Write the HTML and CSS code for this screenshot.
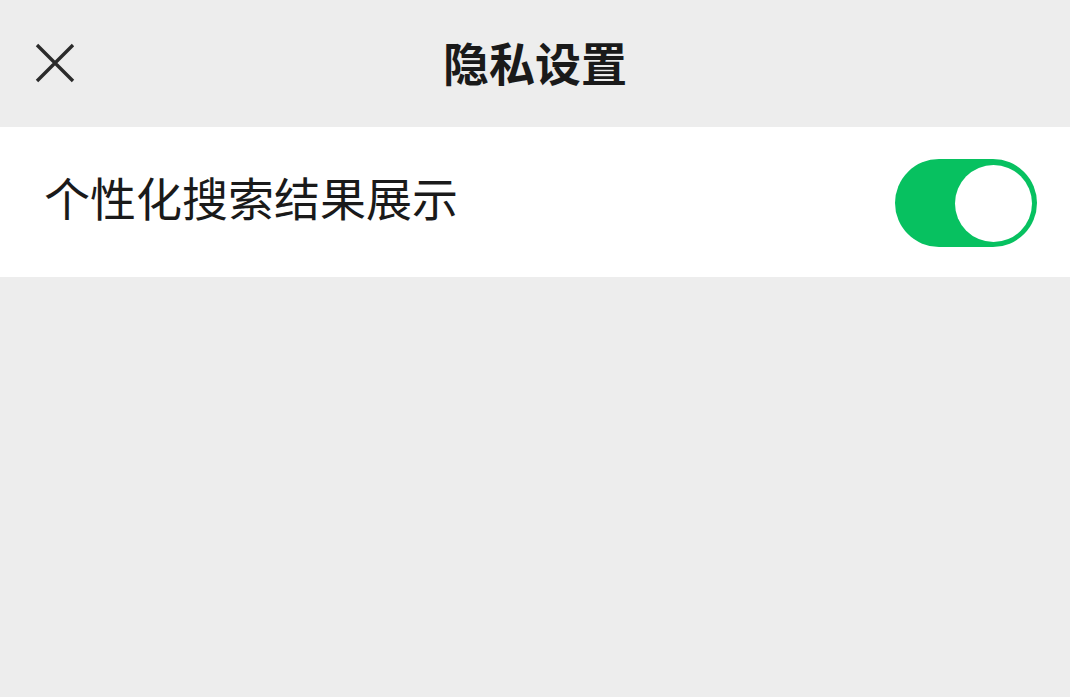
FILE: index.html
```html
<!DOCTYPE html>
<html lang="zh-CN">
<head>
<meta charset="utf-8">
<title>隐私设置</title>
<link rel="stylesheet" href="styles.css">
</head>
<body>
<div class="page">
  <header class="topbar">
    <button class="close" aria-label="关闭">
      <svg width="40" height="40" viewBox="0 0 40 40">
        <path d="M2 2 L38 38 M38 2 L2 38" stroke="#2b2b2b" stroke-width="3.4" stroke-linecap="butt" fill="none"/>
      </svg>
    </button>
    <h1 class="title">隐私设置</h1>
  </header>
  <section class="list">
    <div class="row">
      <span class="label">个性化搜索结果展示</span>
      <span class="switch on"><span class="knob"></span></span>
    </div>
  </section>
</div>
</body>
</html>
```

FILE: styles.css
```css
html, body {
  margin: 0;
  padding: 0;
  background: #ededed;
  font-family: "Noto Sans CJK SC", "Noto Sans", sans-serif;
}
.page {
  width: 1070px;
  height: 697px;
  background: #ededed;
}
.topbar {
  height: 127px;
  display: grid;
  grid-template-columns: 1fr;
  align-items: center;
  position: relative;
}
.close {
  position: absolute;
  left: 35px;
  top: 43px;
  width: 40px;
  height: 40px;
  padding: 0;
  border: 0;
  background: none;
  display: flex;
}
.title {
  margin: 0;
  text-align: center;
  font-size: 46px;
  font-weight: 700;
  color: #1a1a1a;
  line-height: 1;
  padding-bottom: 6px;
}
.list {
  background: #fff;
}
.row {
  height: 150px;
  display: flex;
  align-items: center;
  justify-content: space-between;
  padding: 0 33px 0 44px;
}
.label {
  font-size: 46px;
  color: #1a1a1a;
  line-height: 1;
  margin-top: -12px;
}
.switch {
  width: 142px;
  height: 88px;
  border-radius: 44px;
  background: #07c160;
  display: flex;
  align-items: center;
  justify-content: flex-end;
  padding: 0 5px;
  box-sizing: border-box;
  margin-top: 2px;
}
.knob {
  width: 77px;
  height: 77px;
  border-radius: 50%;
  background: #fff;
}
```
